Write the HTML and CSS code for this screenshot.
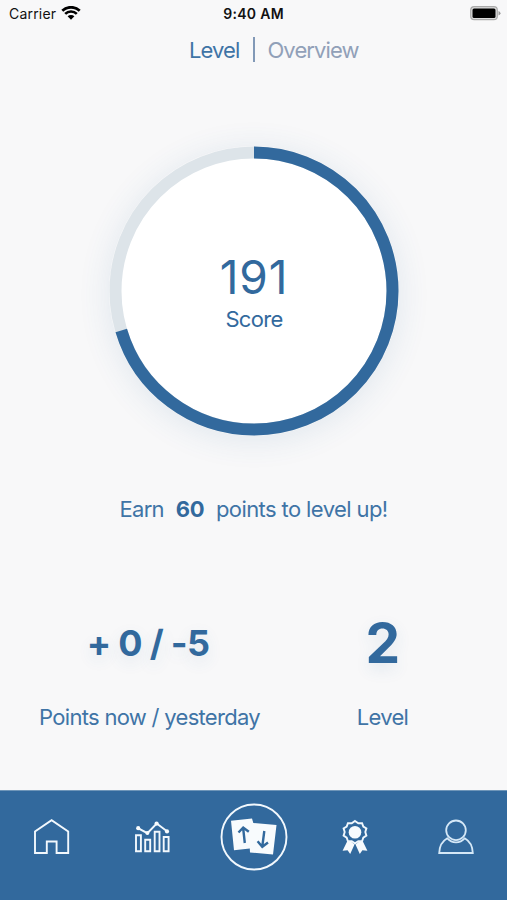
FILE: index.html
```html
<!DOCTYPE html>
<html lang="en">
<head>
    <meta charset="UTF-8">
    <meta name="viewport" content="width=device-width, initial-scale=1.0">
    <title>Level</title>
    <link rel="stylesheet" href="styles.css">
</head>
<body>

<div class="status-bar">
    <div class="carrier">
        <span>Carrier</span>
        <svg width="20" height="14" viewBox="0 0 20 14">
            <path d="M1.3 4.8A12.5 12.5 0 0 1 18.7 4.8" fill="none" stroke="#000" stroke-width="2.8"/>
            <path d="M4.2 7.9A8.2 8.2 0 0 1 15.8 7.9" fill="none" stroke="#000" stroke-width="2.6"/>
            <path d="M6.6 10.3A4.8 4.8 0 0 1 13.4 10.3L10 13.7Z"/>
        </svg>
    </div>
    <div class="time">9:40 AM</div>
    <div class="battery">
        <svg width="31" height="15" viewBox="0 0 31 15">
            <rect x="0.7" y="0.7" width="26.6" height="13" rx="3.5" fill="#ddd" stroke="#aaa" stroke-width="1.2"/>
            <rect x="2.5" y="2.5" width="23" height="9.4" rx="1.5"/>
            <path d="M28.5 5v4.6q2-1 2-2.3t-2-2.3z" fill="#999"/>
        </svg>
    </div>
</div>

<div class="tabs">
    <span class="tab active">Level</span>
    <span class="divider"></span>
    <span class="tab overview">Overview</span>
</div>

<div class="score">
    <svg class="ring" viewBox="0 0 290 290">
        <circle class="ring-track" cx="145" cy="145" r="138.5"/>
        <circle class="ring-value" cx="145" cy="145" r="138.5" pathLength="100" stroke-dasharray="70.4 100" transform="rotate(-90 145 145)"/>
    </svg>
    <div class="score-number">191</div>
    <div class="score-label">Score</div>
</div>

<div class="hint">
    <span class="earn">Earn</span>
    <b>60</b>
    <span class="rest">points to level up!</span>
</div>

<div class="stats">
    <div class="stat points">
        <div class="stat-value">+ 0 / -5</div>
        <div class="stat-label">Points now / yesterday</div>
    </div>
    <div class="stat level">
        <div class="stat-value">2</div>
        <div class="stat-label">Level</div>
    </div>
</div>

<nav class="nav">
    <a class="nav-item">
        <svg width="40" height="40" viewBox="0 0 40 40">
            <path d="M3 36V14.5L19.6 3.2L36.2 14.5V36H24.6V24.5H14.8V36Z"/>
        </svg>
    </a>
    <a class="nav-item">
        <svg width="40" height="40" viewBox="0.8 0 40 40">
            <path d="M3.8 18.3h4.9v16H3.8zM13 22.8h5v11.5h-5zM22.5 14.8h4.8v19.5h-4.8zM31.5 20h4.9v14.3h-4.9z"/>
            <path d="M6.2 11.3L15.2 16.2L24.5 6.5L34.8 14.3"/>
            <g class="solid">
                <circle cx="6" cy="11.2" r="2.1"/>
                <circle cx="15.2" cy="16" r="2"/>
                <circle cx="24.4" cy="6.6" r="2.1"/>
                <circle cx="34.8" cy="14.4" r="2.1"/>
            </g>
        </svg>
    </a>
    <a class="nav-item main">
        <svg width="68" height="68" viewBox="0 0 68 68">
            <circle cx="34" cy="34" r="32.5"/>
            <path class="solid" d="M11 17.7L32 15.5L33.3 20L56.5 22L53 51.5L30 49.5L29.8 45.6L14 47.3Z"/>
            <g class="arrows">
                <path d="M24.8 40L23.2 25.5M18.5 29.5L23.2 24.5L28.8 28.8"/>
                <path d="M44.3 28L42.3 43.5M37.6 38.2L42.3 43.8L48 39.5"/>
            </g>
        </svg>
    </a>
    <a class="nav-item">
        <svg width="40" height="40" viewBox="0 0 40 40">
            <path d="M20 4L23.3 6.3L27.1 6.2L28.3 9.6L31.4 11.4L30.3 15L31.4 18.6L28.3 20.7L27.1 24.2L23.3 24.1L20 26.3L16.7 24.1L12.9 24.2L11.7 20.7L8.6 18.6L9.7 15L8.6 11.4L11.7 9.6L12.9 6.2L16.7 6.3Z"/>
            <g class="solid">
                <circle cx="20" cy="15.2" r="6.3"/>
                <path d="M12 24.8L16.5 25L19.5 27.5L15.2 37L12.6 33.2L7.6 33.7ZM28 24.8L23.5 25L20.5 27.5L24.8 37L27.4 33.2L32.4 33.7Z"/>
            </g>
        </svg>
    </a>
    <a class="nav-item">
        <svg width="40" height="40" viewBox="0 0 40 40">
            <g class="person">
                <circle cx="20" cy="13.3" r="9.8"/>
                <path d="M11.3 21.3C7 23.7 3.5 29 3.2 36H36.8C36.5 29 33 23.7 28.7 21.3C24 26.6 16 26.6 11.3 21.3Z"/>
            </g>
        </svg>
    </a>
</nav>

</body>
</html>
```

FILE: styles.css
```css
* {
    box-sizing: border-box;
}
body {
    margin: 0;
    height: 900px;
    display: flex;
    flex-direction: column;
    font-family: Inter, "Liberation Sans", sans-serif;
    font-size: 22px;
    letter-spacing: -0.7px;
    color: #32699d;
    background-color: #f8f8f9;
    overflow: hidden;
}
.status-bar {
    display: grid;
    grid-template-columns: 1fr auto 1fr;
    align-items: center;
    height: 27px;
    padding: 0 6px 0 9px;
    font-size: 14px;
    letter-spacing: 0.2px;
    color: #111;
}
.carrier {
    display: flex;
    align-items: center;
    gap: 5px;
}
.carrier svg {
    margin-top: -2px;
}
.time {
    margin-right: 3px;
    font-weight: 600;
    letter-spacing: 0.3px;
}
.battery {
    display: flex;
    justify-content: flex-end;
}
.tabs {
    display: flex;
    align-items: center;
    height: 45px;
    padding-left: 189px;
    letter-spacing: -0.9px;
}
.active {
    color: #3f74a6;
}
.divider {
    width: 2px;
    height: 25px;
    margin: 0 12px 0 14px;
    background: #8299b7;
}
.overview {
    color: #91a0b8;
}
.score {
    position: relative;
    width: 290px;
    height: 290px;
    margin: 74px auto 0;
    padding-top: 103px;
    left: 0.5px;
    border-radius: 50%;
    text-align: center;
    box-shadow: 0 4px 32px rgba(50, 105, 157, 0.12);
}
.ring {
    position: absolute;
    top: 0;
    left: 0;
    z-index: -1;
}
.ring-track {
    fill: #fff;
    stroke: #dde4e9;
    stroke-width: 12;
}
.ring-value {
    fill: none;
    stroke: #32699d;
    stroke-width: 12;
}
.score-number {
    font-size: 46px;
    line-height: 57px;
    font-weight: 400;
    letter-spacing: 0.8px;
}
.score-label {
    line-height: 26px;
}
.hint {
    display: flex;
    justify-content: center;
    gap: 12px;
    margin-top: 60px;
    line-height: 26px;
    color: #3f74a6;
}
.hint b {
    font-weight: 700;
    letter-spacing: -0.5px;
    color: #32699d;
}
.hint .rest {
    letter-spacing: -0.6px;
}
.stats {
    display: grid;
    grid-template-columns: 299px 167px;
    margin-top: 91px;
    text-align: center;
}
.stat-value {
    height: 60px;
    line-height: 60px;
    font-size: 36px;
    font-weight: 700;
    text-shadow: 0 6px 16px rgba(50, 105, 157, 0.12);
}
.points .stat-value {
    padding-right: 3px;
}
.level .stat-value {
    font-size: 55px;
}
.stat-label {
    margin-top: 31px;
    line-height: 26px;
    color: #3f74a6;
}
.nav {
    display: grid;
    grid-template-columns: repeat(5, 1fr);
    height: 110px;
    margin-top: auto;
    padding: 12px 0 0 1px;
    background: #32699d;
    border-top: 1px solid #6f96b9;
}
.nav-item {
    display: flex;
    justify-content: center;
    align-items: center;
    height: 68px;
}
.nav svg {
    fill: none;
    stroke: #f2f8fd;
    stroke-width: 1.9;
}
.nav .solid {
    fill: #f8fbfd;
    stroke: none;
}
.nav .arrows {
    stroke: #32699d;
    stroke-width: 2.4;
}
.nav .person {
    stroke: #d5e8f7;
    stroke-width: 1.8;
}
```
